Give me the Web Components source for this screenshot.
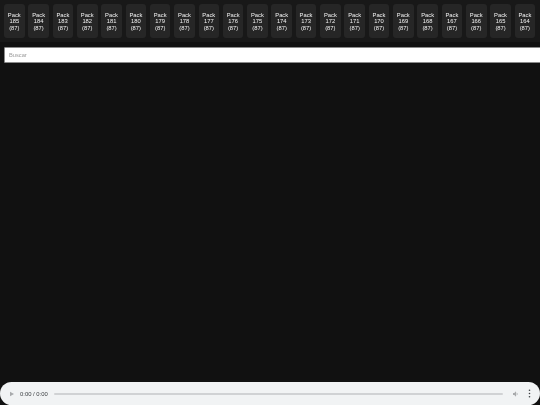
<!DOCTYPE html>
<html>
<head>
<meta charset="utf-8">
<title>Packs</title>
<style>
html, body { margin: 0; height: 100%; overflow: hidden; background: #111111; }
body { display: flex; flex-direction: column; font-family: "Liberation Sans", Arial, sans-serif; }
</style>
</head>
<body>
<pack-bar first="185" last="164" count="87"></pack-bar>
<search-box placeholder="Buscar"></search-box>
<div style="flex:1"></div>
<audio-bar time="0:00 / 0:00"></audio-bar>
<script>
class PackCard extends HTMLElement {
    constructor() {
        super()
        this._shadowRoot = this.attachShadow({ mode: 'open' })
    }
    connectedCallback() {
        this._shadowRoot.innerHTML = `
        <style>
        :host {
            display: flex;
            flex: 0 0 20.6px;
            height: 34px;
            align-items: center;
            justify-content: center;
            text-align: center;
            background: #262626;
            border-radius: 3px;
            color: #f2f2f2;
            font: 5.8px/6.7px "Liberation Sans", Arial, sans-serif;
        }
        div { filter: blur(0.2px); padding-top: 1.2px; }
        </style>
        <div>Pack<br>${this.getAttribute("num")}<br>(${this.getAttribute("count")})</div>`;
    }
}
window.customElements.define('pack-card', PackCard);

class PackBar extends HTMLElement {
    constructor() {
        super()
        this._shadowRoot = this.attachShadow({ mode: 'open' })
    }
    connectedCallback() {
        const first = Number(this.getAttribute("first"));
        const last = Number(this.getAttribute("last"));
        const count = this.getAttribute("count");
        let cards = "";
        for (let n = first; n >= last; n--) {
            cards += `<pack-card num="${n}" count="${count}"></pack-card>`;
        }
        this._shadowRoot.innerHTML = `
        <style>
        :host {
            display: flex;
            gap: 3.73px;
            padding: 4px 0 4px 4px;
            height: 34px;
            background: #181818;
            overflow: hidden;
        }
        </style>
        ${cards}`;
    }
}
window.customElements.define('pack-bar', PackBar);

class SearchBox extends HTMLElement {
    constructor() {
        super()
        this._shadowRoot = this.attachShadow({ mode: 'open' })
    }
    connectedCallback() {
        this._shadowRoot.innerHTML = `
        <style>
        :host {
            display: block;
            padding: 4.5px 0 0 4px;
        }
        .field {
            height: 16px;
            margin-right: -4px;
            box-sizing: border-box;
            background: #ffffff;
            border: 1px solid #8a8a8a;
            border-radius: 1px;
            padding-left: 4px;
            color: #9a9a9a;
            font: 5.7px/14px "Liberation Sans", Arial, sans-serif;
        }
        span { display: inline-block; filter: blur(0.2px); }
        </style>
        <div class="field"><span>${this.getAttribute("placeholder")}</span></div>`;
    }
}
window.customElements.define('search-box', SearchBox);

class AudioBar extends HTMLElement {
    constructor() {
        super()
        this._shadowRoot = this.attachShadow({ mode: 'open' })
    }
    connectedCallback() {
        this._shadowRoot.innerHTML = `
        <style>
        :host {
            display: flex;
            align-items: center;
            height: 23px;
            background: #f1f3f4;
            border-radius: 12px;
            color: #3c4043;
            font: 5.9px "Liberation Sans", Arial, sans-serif;
            padding: 0 9px 0 9px;
        }
        .time { margin: 0 6px 0 5px; white-space: nowrap; filter: blur(0.2px); }
        .track { flex: 1; height: 2px; background: #d0d2d4; border-radius: 1px; }
        svg { display: block; flex: none; }
        .vol { margin: 0 8px 0 9px; }
        </style>
        <svg width="6" height="6" viewBox="0 0 6 6"><path d="M1 0.8 L5 3 L1 5.2 Z" fill="#a8aaac"/></svg>
        <span class="time">${this.getAttribute("time")}</span>
        <div class="track"></div>
        <svg class="vol" width="8" height="8" viewBox="0 0 24 24"><path d="M3 9v6h4l5 5V4L7 9H3z M14 7.5v9c1.800-.9 3-2.700 3-4.500s-1.200-3.600-3-4.500z" fill="#a8aaac"/></svg>
        <svg width="3" height="9" viewBox="0 0 3 9"><circle cx="1.5" cy="1.2" r="0.8" fill="#3c4043"/><circle cx="1.5" cy="4.5" r="0.8" fill="#3c4043"/><circle cx="1.5" cy="7.8" r="0.8" fill="#3c4043"/></svg>`;
    }
}
window.customElements.define('audio-bar', AudioBar);
</script>
</body>
</html>
